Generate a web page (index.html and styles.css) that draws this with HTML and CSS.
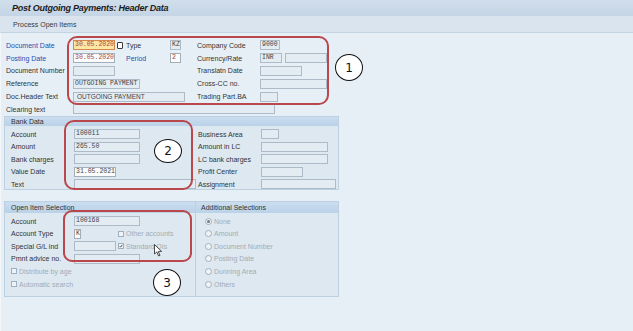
FILE: index.html
```html
<!DOCTYPE html>
<html lang="en">

<head>
  <meta charset="UTF-8">
  <meta name="viewport" content="width=device-width, initial-scale=1.0">
  <title>Post Outgoing Payments: Header Data</title>
  <link rel="stylesheet" href="styles.css">
</head>

<body>

  <div class="titlebar">
    <h1>Post Outgoing Payments: Header Data</h1>
  </div>
  <div class="toolbar">
    <span>Process Open Items</span>
  </div>

  <div class="screen">

    <div class="hdr">
      <div class="row">
        <span class="lbl req">Document Date</span>
        <span class="slot"><span class="f w42 focus">30.05.2020</span><span class="help"></span></span>
        <span class="lbl2">Type</span>
        <span class="f w11">KZ</span>
      </div>
      <div class="row">
        <span class="lbl rl">Company Code</span>
        <span class="f w20">9000</span>
      </div>

      <div class="row">
        <span class="lbl req">Posting Date</span>
        <span class="slot"><span class="f w42 edit">30.05.2020</span></span>
        <span class="lbl2 req">Period</span>
        <span class="f w11 edit">2</span>
      </div>
      <div class="row">
        <span class="lbl rl">Currency/Rate</span>
        <span class="f w22">INR</span>
        <span class="f w42 ml3"></span>
      </div>

      <div class="row">
        <span class="lbl">Document Number</span>
        <span class="f w42"></span>
      </div>
      <div class="row">
        <span class="lbl rl">Translatn Date</span>
        <span class="f w42"></span>
      </div>

      <div class="row">
        <span class="lbl">Reference</span>
        <span class="f w67">OUTGOING PAYMENT</span>
      </div>
      <div class="row">
        <span class="lbl rl">Cross-CC no.</span>
        <span class="f w67"></span>
      </div>

      <div class="row">
        <span class="lbl">Doc.Header Text</span>
        <span class="f w112 sans">OUTGOING PAYMENT</span>
      </div>
      <div class="row">
        <span class="lbl rl">Trading Part.BA</span>
        <span class="f w18"></span>
      </div>

      <div class="row wide">
        <span class="lbl">Clearing text</span>
        <span class="f w202"></span>
      </div>
    </div>

    <div class="group bank">
      <div class="group-title">Bank Data</div>
      <div class="group-body two">
        <div class="row">
          <span class="lbl g">Account</span>
          <span class="f w66">100011</span>
        </div>
        <div class="row">
          <span class="lbl g">Business Area</span>
          <span class="f w18"></span>
        </div>
        <div class="row">
          <span class="lbl g">Amount</span>
          <span class="f w66">265.50</span>
        </div>
        <div class="row">
          <span class="lbl g">Amount in LC</span>
          <span class="f w67"></span>
        </div>
        <div class="row">
          <span class="lbl g">Bank charges</span>
          <span class="f w66"></span>
        </div>
        <div class="row">
          <span class="lbl g">LC bank charges</span>
          <span class="f w67"></span>
        </div>
        <div class="row">
          <span class="lbl g">Value Date</span>
          <span class="f w42 edit dark">31.05.2021</span>
        </div>
        <div class="row">
          <span class="lbl g">Profit Center</span>
          <span class="f w42"></span>
        </div>
        <div class="row">
          <span class="lbl g">Text</span>
          <span class="f w122"></span>
        </div>
        <div class="row">
          <span class="lbl g">Assignment</span>
          <span class="f w75"></span>
        </div>
      </div>
    </div>

    <div class="groups">
      <div class="group open">
        <div class="group-title">Open Item Selection</div>
        <div class="group-body">
          <div class="row">
            <span class="lbl g">Account</span>
            <span class="f w66">100168</span>
          </div>
          <div class="row">
            <span class="lbl g">Account Type</span>
            <span class="slot2"><span class="f w7 edit dark">K</span></span>
            <span class="cb"></span><span class="off">Other accounts</span>
          </div>
          <div class="row">
            <span class="lbl g">Special G/L ind</span>
            <span class="slot2"><span class="f w42"></span></span>
            <span class="cb on"><svg viewBox="0 0 6 6"><path d="M1 3.2 L2.5 4.7 L5 1.2" fill="none" stroke="#333" stroke-width="1.2"/></svg></span><span class="off">Standard OIs</span>
          </div>
          <div class="row">
            <span class="lbl g">Pmnt advice no.</span>
            <span class="f w66"></span>
          </div>
          <div class="row">
            <span class="cb"></span><span class="off">Distribute by age</span>
          </div>
          <div class="row">
            <span class="cb"></span><span class="off">Automatic search</span>
          </div>
        </div>
      </div>

      <div class="group extra">
        <div class="group-title">Additional Selections</div>
        <div class="group-body radios">
          <div class="row"><span class="rb on"></span><span class="off">None</span></div>
          <div class="row"><span class="rb"></span><span class="off">Amount</span></div>
          <div class="row"><span class="rb"></span><span class="off">Document Number</span></div>
          <div class="row"><span class="rb"></span><span class="off">Posting Date</span></div>
          <div class="row"><span class="rb"></span><span class="off">Dunning Area</span></div>
          <div class="row"><span class="rb"></span><span class="off">Others</span></div>
        </div>
      </div>
    </div>

  </div>

  <!-- hand drawn annotations over the screen -->
  <div class="mark box1"></div>
  <div class="mark box2"></div>
  <div class="mark box3"></div>
  <div class="num n1">1</div>
  <div class="num n2">2</div>
  <div class="num n3">3</div>
  <svg class="pointer" viewBox="0 0 9 13" width="9" height="13">
    <path d="M0.5 0.5 L0.5 10 L2.8 7.9 L4.6 12 L6 11.4 L4.3 7.4 L7.6 7.4 Z" fill="#fff" stroke="#222" stroke-width="0.8" stroke-linejoin="round"/>
  </svg>

</body>

</html>
```

FILE: styles.css
```css
* {
  margin: 0;
  padding: 0;
  box-sizing: border-box;
}

body {
  width: 633px;
  height: 331px;
  overflow: hidden;
  position: relative;
  background: #e7eff6;
  font: 7px "Liberation Sans", Arial, sans-serif;
  color: #333;
}

.titlebar {
  height: 16px;
  background: linear-gradient(#d1deeb, #c4d5e6);
  padding-left: 12px;
  display: flex;
  align-items: center;
}

.titlebar h1 {
  font: italic bold 9px "Liberation Sans", Arial, sans-serif;
  letter-spacing: -0.25px;
  color: #1c1c1c;
}

.toolbar {
  height: 17px;
  background: #d9e4ee;
  border-bottom: 1px solid #c4d3e1;
  padding-left: 13px;
  display: flex;
  align-items: center;
  color: #3a3a3a;
}

.screen {
  padding: 6px 0 0 3px;
  border-left: 1px solid #f3f7fa;
  height: 298px;
}

/* header data */

.hdr {
  display: grid;
  grid-template-columns: 191px auto;
  grid-auto-rows: 12.8px;
  padding-left: 2px;
}

.row {
  display: flex;
  align-items: center;
  white-space: nowrap;
}

.row.wide {
  grid-column: 1 / -1;
}

.lbl {
  width: 67px;
  flex: none;
}

.lbl.rl,
.lbl.g {
  width: 63px;
}

.req {
  color: #2450b0;
}

.lbl2 {
  width: 44px;
  flex: none;
}

.slot {
  width: 53px;
  display: flex;
  align-items: center;
  gap: 2px;
  flex: none;
}

.slot2 {
  width: 44px;
  display: flex;
  align-items: center;
  flex: none;
}

.help {
  width: 6px;
  height: 7px;
  border: 1.5px solid #3a3a3a;
  background: #fff;
  border-radius: 1px;
}

.f {
  height: 10px;
  flex: none;
  border: 1px solid #adbac7;
  background: #e3ebf3;
  font: 6.5px "Liberation Mono", monospace;
  line-height: 8px;
  padding: 0 1px;
  color: #444;
  overflow: hidden;
}

.f.edit {
  background: #fbfcfd;
  border-color: #a3aeb9;
  color: #a6453f;
}

.f.dark {
  color: #444;
}

.f.focus {
  background: #fce6a4;
  border-color: #d5874c;
  color: #a6453f;
}

.f.sans {
  font-family: "Liberation Sans", Arial, sans-serif;
  padding-left: 3px;
}

.ml3 {
  margin-left: 3px;
}

.w7 { width: 7px; }
.w11 { width: 11px; }
.w18 { width: 18px; }
.w20 { width: 20px; }
.w22 { width: 22px; }
.w42 { width: 42px; }
.w66 { width: 66px; }
.w67 { width: 67px; }
.w75 { width: 75px; }
.w112 { width: 112px; }
.w122 { width: 122px; }
.w202 { width: 202px; }

/* group boxes */

.group {
  background: #dde8f1;
  border: 1px solid #bdd0e1;
}

.group-title {
  height: 9px;
  background: linear-gradient(#cbdef0, #bad1e8);
  padding-left: 6px;
  display: flex;
  align-items: center;
  color: #333;
}

.group-body {
  padding: 2px 0 0 6px;
  display: grid;
  grid-auto-rows: 12.5px;
}

.bank {
  width: 335px;
  height: 74px;
}

.bank .two {
  grid-template-columns: 187px auto;
}

.groups {
  display: flex;
  margin-top: 11px;
}

.groups .group {
  height: 96px;
}

.groups .group-title {
  height: 11px;
}

.groups .group-body {
  grid-auto-rows: 12.6px;
}

.open {
  width: 192px;
}

.extra {
  width: 143px;
  border-left: 0;
}

.extra .group-title {
  padding-left: 5px;
}

.radios {
  padding-left: 9px;
}

.off {
  color: #a3acb5;
  margin-left: 2px;
}

.cb {
  width: 6px;
  height: 6px;
  flex: none;
  border: 1px solid #9eafbf;
  background: #eef3f8;
  display: flex;
}

.cb svg {
  width: 100%;
  height: 100%;
}

.rb {
  width: 7px;
  height: 7px;
  flex: none;
  border: 1px solid #a3afbb;
  border-radius: 50%;
  background: #eef3f8;
  display: flex;
  align-items: center;
  justify-content: center;
}

.rb.on::after {
  content: '';
  width: 3px;
  height: 3px;
  border-radius: 50%;
  background: #6f7a86;
}

/* annotations */

.mark {
  position: absolute;
  border: 2px solid #b9474c;
  border-radius: 10px;
}

.box1 {
  left: 67px;
  top: 36px;
  width: 262px;
  height: 69px;
}

.box2 {
  left: 64px;
  top: 120px;
  width: 129px;
  height: 70px;
}

.box3 {
  left: 63px;
  top: 210px;
  width: 129px;
  height: 52px;
  border-radius: 9px;
}

.num {
  position: absolute;
  width: 28px;
  height: 27px;
  border: 1.5px solid #111;
  border-radius: 50%;
  background: #fff;
  display: flex;
  align-items: center;
  justify-content: center;
  font: 12px "DejaVu Sans", sans-serif;
  color: #111;
}

.n1 {
  left: 335px;
  top: 54px;
}

.n2 {
  left: 154px;
  top: 139px;
  height: 24px;
}

.n3 {
  left: 153px;
  top: 269px;
}

.pointer {
  position: absolute;
  left: 154px;
  top: 244px;
}
```
